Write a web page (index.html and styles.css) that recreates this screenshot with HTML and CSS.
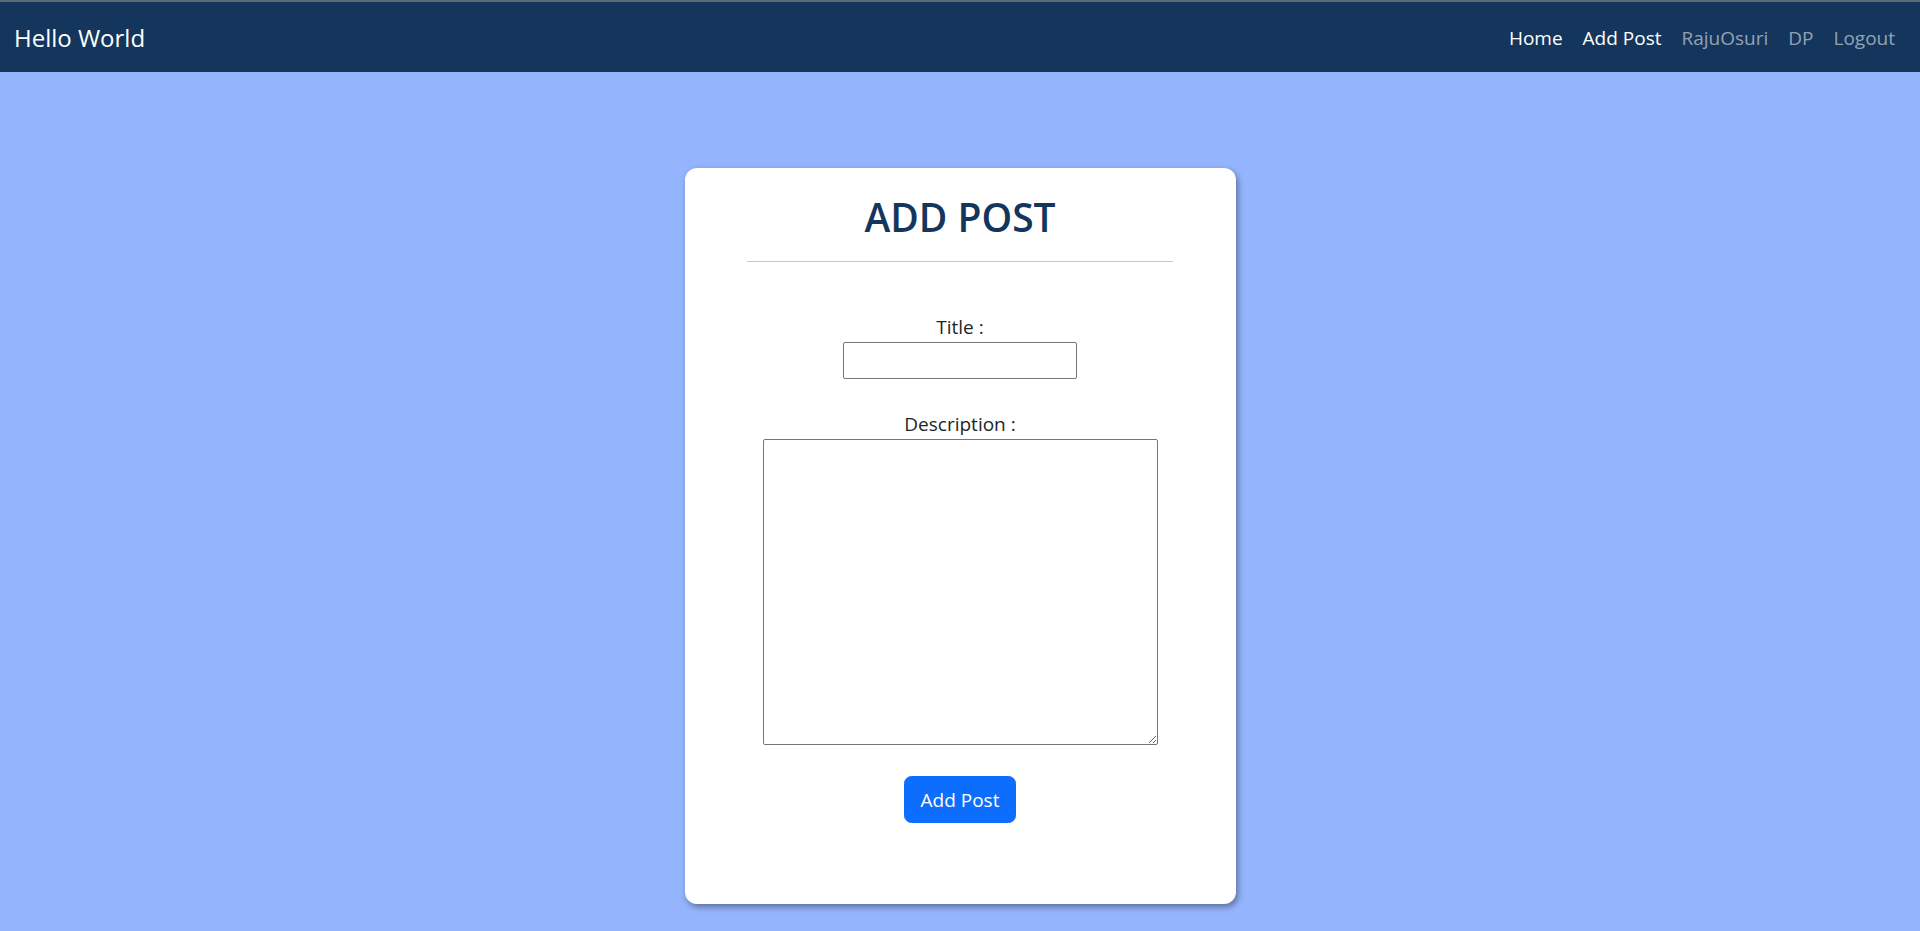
FILE: index.html
```html
<!DOCTYPE html>
<html lang="en">
<head>
<meta charset="utf-8">
<title>Add Post</title>
<link rel="stylesheet" href="styles.css">
</head>
<body>
<div class="topline"></div>
<nav class="navbar">
  <a class="brand" href="#">Hello World</a>
  <ul class="nav-links">
    <li><a class="nav-link active" href="#">Home</a></li>
    <li><a class="nav-link active" href="#">Add Post</a></li>
    <li><a class="nav-link" href="#">RajuOsuri</a></li>
    <li><a class="nav-link" href="#">DP</a></li>
    <li><a class="nav-link" href="#">Logout</a></li>
  </ul>
</nav>
<main class="page">
  <section class="card">
    <h1 class="card-title">ADD POST</h1>
    <hr class="divider">
    <form class="post-form">
      <label class="field-label" for="title">Title :</label>
      <input class="title-input" id="title" type="text">
      <label class="field-label desc-label" for="desc">Description :</label>
      <textarea class="desc-input" id="desc"></textarea>
      <button class="submit-btn" type="button">Add Post</button>
    </form>
  </section>
</main>
</body>
</html>
```

FILE: styles.css
```css
* { box-sizing: border-box; }
html, body { margin: 0; padding: 0; }
body {
  background: #94b4fd;
  font-family: "Open Sans", "Noto Sans", sans-serif;
  color: #212529;
  min-height: 931px;
}
.topline { height: 2px; background: #5d6a72; }
.navbar {
  height: 70px;
  background: #14365d;
  display: flex;
  align-items: center;
  justify-content: space-between;
  padding: 0 15px 0 14px;
}
.brand {
  color: #ffffff;
  text-decoration: none;
  font-size: 24px;
  line-height: 30px;
  padding-top: 1px;
}
.nav-links {
  list-style: none;
  margin: 0;
  padding: 0;
  display: flex;
  align-items: center;
}
.nav-link {
  display: block;
  padding: 1px 10px 0;
  color: rgba(255, 255, 255, 0.55);
  text-decoration: none;
  font-size: 19px;
  line-height: 30px;
}
.nav-link.active { color: #ffffff; }
.page {
  display: flex;
  justify-content: center;
  padding-top: 96px;
}
.card {
  width: 551px;
  height: 736px;
  background: #ffffff;
  border-radius: 12px;
  box-shadow: 2px 3px 6px rgba(0, 0, 0, 0.38);
  display: flex;
  flex-direction: column;
  align-items: center;
  padding-top: 25px;
}
.card-title {
  margin: 0;
  font-size: 39px;
  line-height: 48px;
  font-weight: 600;
  color: #14365d;
}
.divider {
  width: 426px;
  margin: 20px 0 0;
  border: 0;
  border-top: 1px solid #c8c8c8;
}
.post-form {
  display: flex;
  flex-direction: column;
  align-items: center;
  margin-top: 50px;
}
.field-label {
  font-size: 19px;
  line-height: 30px;
  color: #212529;
}
.desc-label { margin-top: 30px; }
.title-input {
  width: 234px;
  height: 37px;
  border: 1px solid #767676;
  border-radius: 2px;
  background: #fff;
  font-size: 20px;
}
.desc-input {
  width: 395px;
  height: 306px;
  border: 1px solid #767676;
  border-radius: 2px;
  background: #fff;
  font-size: 20px;
  display: block;
}
.submit-btn {
  margin-top: 31px;
  width: 112px;
  height: 47px;
  background: #0d6efd;
  color: #ffffff;
  border: 1px solid #0d6efd;
  border-radius: 7.5px;
  font-family: "Open Sans", "Noto Sans", sans-serif;
  font-size: 19px;
  line-height: 30px;
  padding: 0;
}
```
